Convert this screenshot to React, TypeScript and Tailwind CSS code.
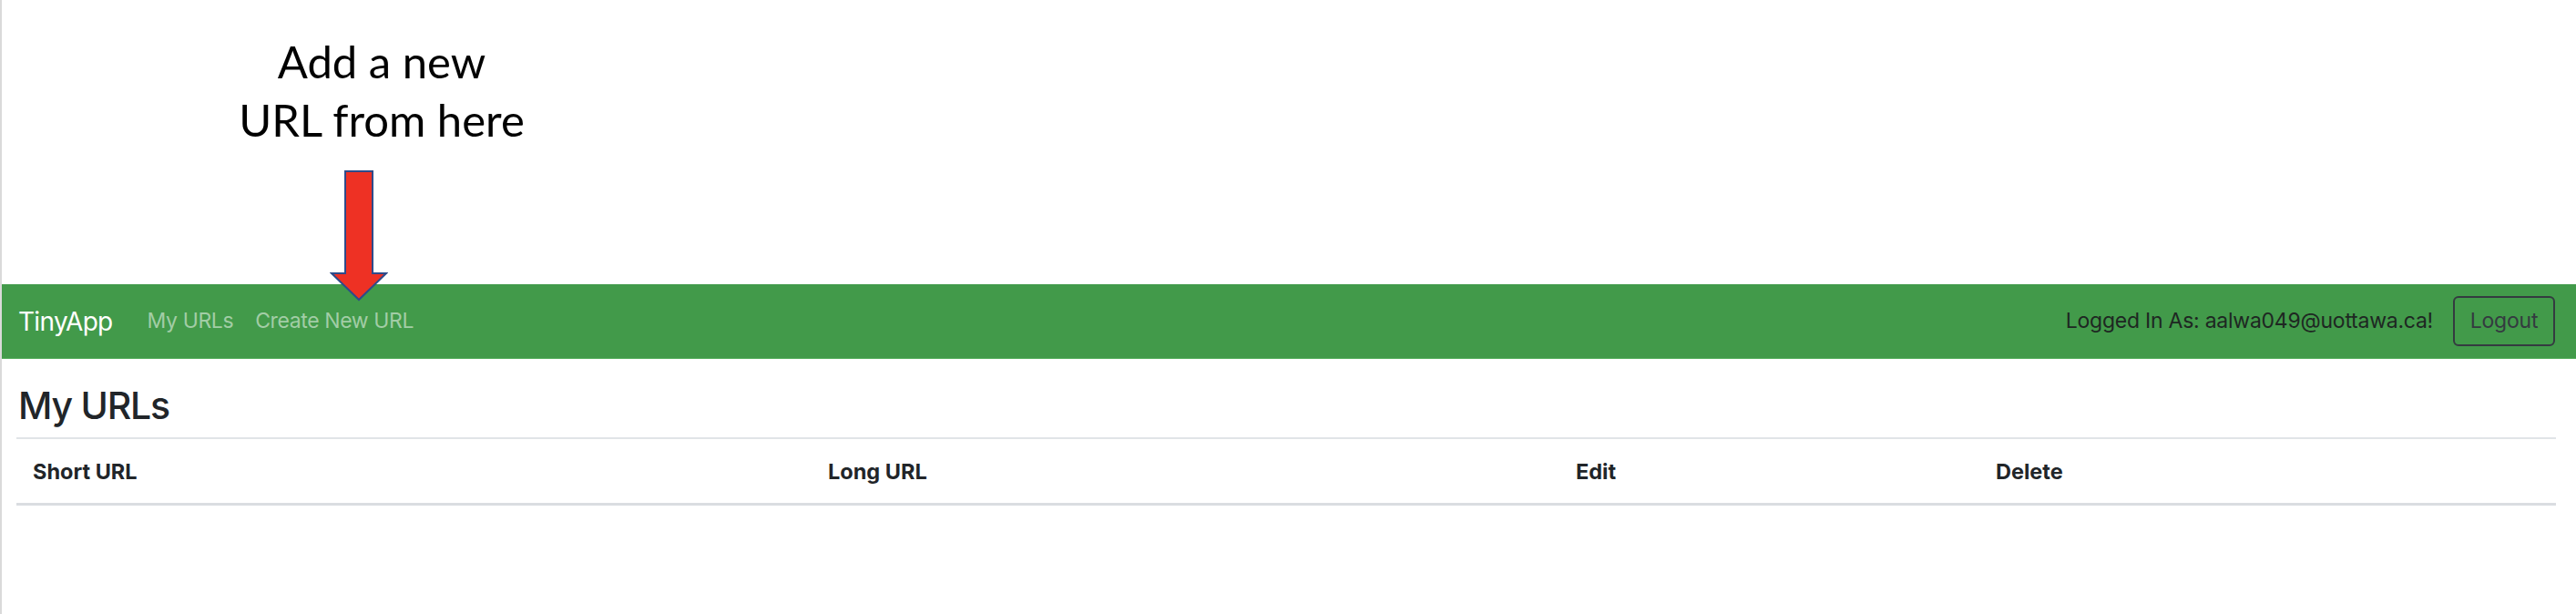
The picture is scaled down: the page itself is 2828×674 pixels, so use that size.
import React from "react";

const inter = { fontFamily: "Inter, 'Liberation Sans', sans-serif" };

export default function App() {
  return (
    <div
      className="relative min-h-[674px] w-[2828px] bg-white border-l-2 border-[#dadada] text-[#212529]"
      style={inter}
    >
      {/* annotation */}
      <div className="h-[312px] w-[834px] pt-[35px] text-center text-black text-[49px] leading-[64px] font-['Lato','Open_Sans',sans-serif]">
        <div>Add a new</div>
        <div>URL from here</div>
      </div>

      <svg
        className="absolute left-[360px] top-[186px] z-10"
        width="64"
        height="146"
        viewBox="0 0 64 146"
      >
        <polygon
          points="17,2 47,2 47,114 62,114 32,143 2,114 17,114"
          fill="#ee3124"
          stroke="#2f4b8a"
          strokeWidth="2"
          strokeLinejoin="miter"
        />
      </svg>

      {/* navbar */}
      <nav className="flex h-[82px] items-center bg-[#429a4a] border-b border-[#55ad5c] pl-[18px] pr-[23px] tracking-[-0.015em]">
        <span className="text-[28px] text-white mr-[26px] tracking-[-0.025em]">TinyApp</span>
        <a className="px-[12px] text-[23px] text-[#a2cda6] tracking-[-0.017em]">My URLs</a>
        <a className="px-[12px] text-[23px] text-[#a2cda6] tracking-[-0.017em]">Create New URL</a>
        <div className="ml-auto flex items-center gap-[22px]">
          <span className="text-[23px] text-[#1e2722]">Logged In As: aalwa049@uottawa.ca!</span>
          <button className="h-[55px] w-[112px] rounded-[6px] border-2 border-[#343a40] text-[23px] text-[#343a40]">
            Logout
          </button>
        </div>
      </nav>

      {/* content */}
      <main className="pl-[16px] pr-[22px]">
        <h2 className="mt-[27px] mb-[10px] pl-[2px] text-[41px] leading-[1.2] font-medium tracking-[-0.03em] text-[#212529]">
          My URLs
        </h2>
        <div className="grid grid-cols-[874px_821px_461px_630px] h-[75px] items-center border-t-2 border-t-[#e1e4e7] border-b-[3px] border-b-[#dadde1] text-[23.5px] leading-[33px] font-bold text-[#212529]">
          <div className="pl-[18px]">Short URL</div>
          <div className="pl-[17px]">Long URL</div>
          <div className="pl-[17px]">Edit</div>
          <div className="pl-[17px]">Delete</div>
        </div>
      </main>
    </div>
  );
}
